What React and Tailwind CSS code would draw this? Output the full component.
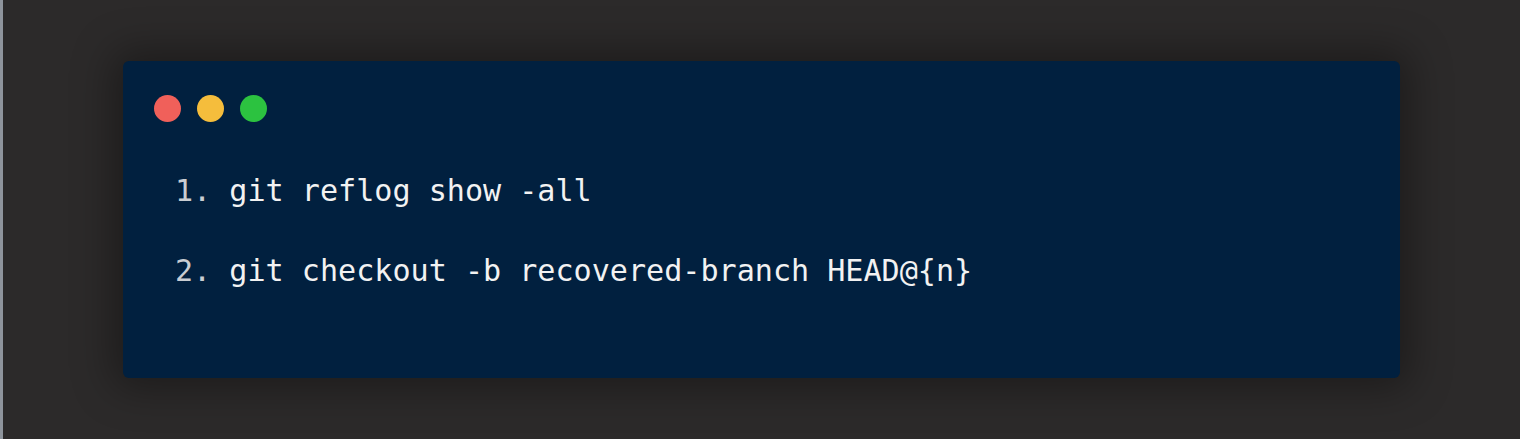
import React from 'react';

const lines = [
  'git reflog show -all',
  'git checkout -b recovered-branch HEAD@{n}',
];

export default function App() {
  return (
    <div className="flex h-[439px] w-full bg-[#2c2a2a]">
      <div className="w-[3px] bg-[#8e949c]" />
      <div className="flex-1 pl-[120px] pr-[120px] pt-[61px] pb-[61px]">
        <div className="h-[317px] rounded-md bg-[#01203f] px-[31px] pt-[34px] shadow-[0_0_40px_10px_rgba(0,0,0,0.35)]">
          <div className="flex gap-4">
            <span className="h-[27px] w-[27px] rounded-full bg-[#f0605a]" />
            <span className="h-[27px] w-[27px] rounded-full bg-[#f5bd3c]" />
            <span className="h-[27px] w-[27px] rounded-full bg-[#2cc240]" />
          </div>
          <ol className="mt-[51px] space-y-[44px] pl-[21px] font-['DejaVu_Sans_Mono',monospace] text-[30.1px] leading-[36px]">
            {lines.map((line, i) => (
              <li key={i} className="flex whitespace-pre">
                <span className="text-[#c9cdd2]">{`${i + 1}. `}</span>
                <span className="text-[#f2f2f2]">{line}</span>
              </li>
            ))}
          </ol>
        </div>
      </div>
    </div>
  );
}
